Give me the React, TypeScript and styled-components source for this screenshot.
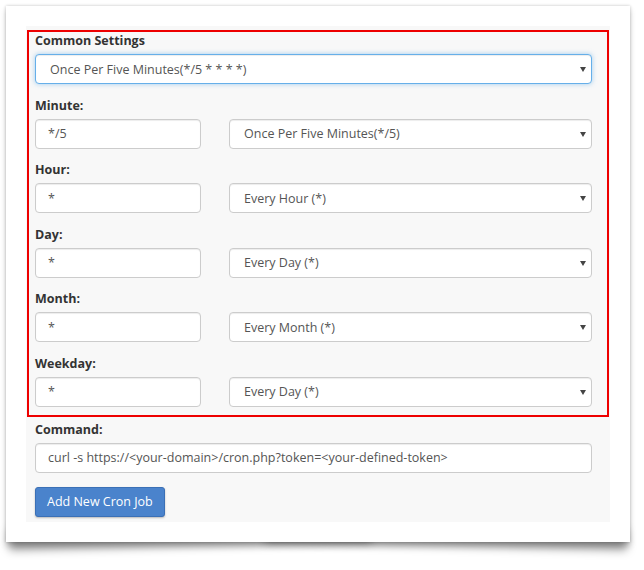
import React from 'react';
import styled, { createGlobalStyle } from 'styled-components';

const GlobalStyle = createGlobalStyle`
  html {
    background: #ffffff;
  }
  html, body {
    margin: 0;
    padding: 0;
  }
  body {
    font-family: "Open Sans", "Liberation Sans", sans-serif;
    font-size: 12.5px;
    color: #333333;
  }
  * {
    box-sizing: border-box;
  }
`;

const Page = styled.div`
  padding: 6px 14px 30px 6px;
`;

const Card = styled.div`
  position: relative;
  background: #ffffff;
  padding: 20px;
  box-shadow: 0 0 3px rgba(0, 0, 0, 0.22), 0 4px 6px rgba(0, 0, 0, 0.18);

  &::before,
  &::after {
    content: '';
    position: absolute;
    z-index: -1;
    bottom: 12px;
    width: 58%;
    height: 20px;
    box-shadow: 0 20px 10px rgba(0, 0, 0, 0.4);
  }

  &::before {
    left: 3px;
    transform: rotate(-1.3deg);
    transform-origin: left bottom;
  }

  &::after {
    right: 3px;
    transform: rotate(1.3deg);
    transform-origin: right bottom;
  }
`;

const Panel = styled.form`
  background: #f8f8f8;
  padding: 4px 1.5px 5px 1px;
`;

const Highlight = styled.div`
  border: 2px solid #ee0000;
  padding: 0 14.5px 8px 6px;
`;

const Group = styled.div<{ $last?: boolean }>`
  margin-bottom: ${({ $last }) => ($last ? '0' : '12.5px')};
`;

const Outside = styled.div`
  padding: 4px 17px 0 8px;
`;

const Label = styled.label`
  display: block;
  font-weight: 700;
  font-size: 12.5px;
  line-height: 17px;
  color: #333333;
  margin-bottom: 5px;
`;

const Row = styled.div`
  display: grid;
  grid-template-columns: 166px 1fr;
  gap: 28px;
`;

const controlBase = `
  display: block;
  width: 100%;
  height: 30px;
  background: #ffffff;
  border: 1px solid #cccccc;
  border-radius: 4px;
  font-family: "Open Sans", "Liberation Sans", sans-serif;
  font-size: 12.5px;
  color: #555555;
  box-shadow: inset 0 1px 1px rgba(0, 0, 0, 0.075);
  outline: none;
`;

const TextInput = styled.input`
  ${controlBase}
  padding: 0 12px;
`;

const SelectWrap = styled.div`
  position: relative;

  &::after {
    content: '';
    position: absolute;
    right: 6px;
    top: 50%;
    margin-top: -2px;
    border-left: 3px solid transparent;
    border-right: 3px solid transparent;
    border-top: 5px solid #444444;
    pointer-events: none;
  }
`;

const Select = styled.select<{ $focused?: boolean }>`
  ${controlBase}
  appearance: none;
  -webkit-appearance: none;
  padding: 0 20px 0 14px;
  border-color: ${({ $focused }) => ($focused ? '#66afe9' : '#cccccc')};
  box-shadow: ${({ $focused }) =>
    $focused
      ? 'inset 0 1px 1px rgba(0,0,0,.075), 0 0 5px rgba(102,175,233,.6)'
      : 'inset 0 1px 1px rgba(0,0,0,.075)'};
`;

const SubmitButton = styled.button`
  margin-top: 14px;
  height: 30px;
  padding: 0 11px;
  background: #4a83cc;
  border: 1px solid #3b70b6;
  border-radius: 3px;
  color: #ffffff;
  font-family: "Open Sans", "Liberation Sans", sans-serif;
  font-size: 12.5px;
  box-shadow: 0 1px 2px rgba(0, 0, 0, 0.25);
  cursor: pointer;
`;

type Field = {
  label: string;
  value: string;
  option: string;
};

const fields: Field[] = [
  { label: 'Minute:', value: '*/5', option: 'Once Per Five Minutes(*/5)' },
  { label: 'Hour:', value: '*', option: 'Every Hour (*)' },
  { label: 'Day:', value: '*', option: 'Every Day (*)' },
  { label: 'Month:', value: '*', option: 'Every Month (*)' },
  { label: 'Weekday:', value: '*', option: 'Every Day (*)' },
];

const App: React.FC = () => {
  return (
    <>
      <GlobalStyle />
      <Page>
        <Card>
          <Panel onSubmit={e => e.preventDefault()}>
            <Highlight>
              <Group>
                <Label>Common Settings</Label>
                <SelectWrap>
                  <Select $focused defaultValue="five">
                    <option value="five">Once Per Five Minutes(*/5 * * * *)</option>
                  </Select>
                </SelectWrap>
              </Group>

              {fields.map((f, i) => (
                <Group key={f.label} $last={i === fields.length - 1}>
                  <Label>{f.label}</Label>
                  <Row>
                    <TextInput type="text" defaultValue={f.value} />
                    <SelectWrap>
                      <Select defaultValue={f.option}>
                        <option value={f.option}>{f.option}</option>
                      </Select>
                    </SelectWrap>
                  </Row>
                </Group>
              ))}
            </Highlight>

            <Outside>
              <Label>Command:</Label>
              <TextInput
                type="text"
                defaultValue="curl -s https://<your-domain>/cron.php?token=<your-defined-token>"
              />
              <SubmitButton type="submit">Add New Cron Job</SubmitButton>
            </Outside>
          </Panel>
        </Card>
      </Page>
    </>
  );
};

export default App;
